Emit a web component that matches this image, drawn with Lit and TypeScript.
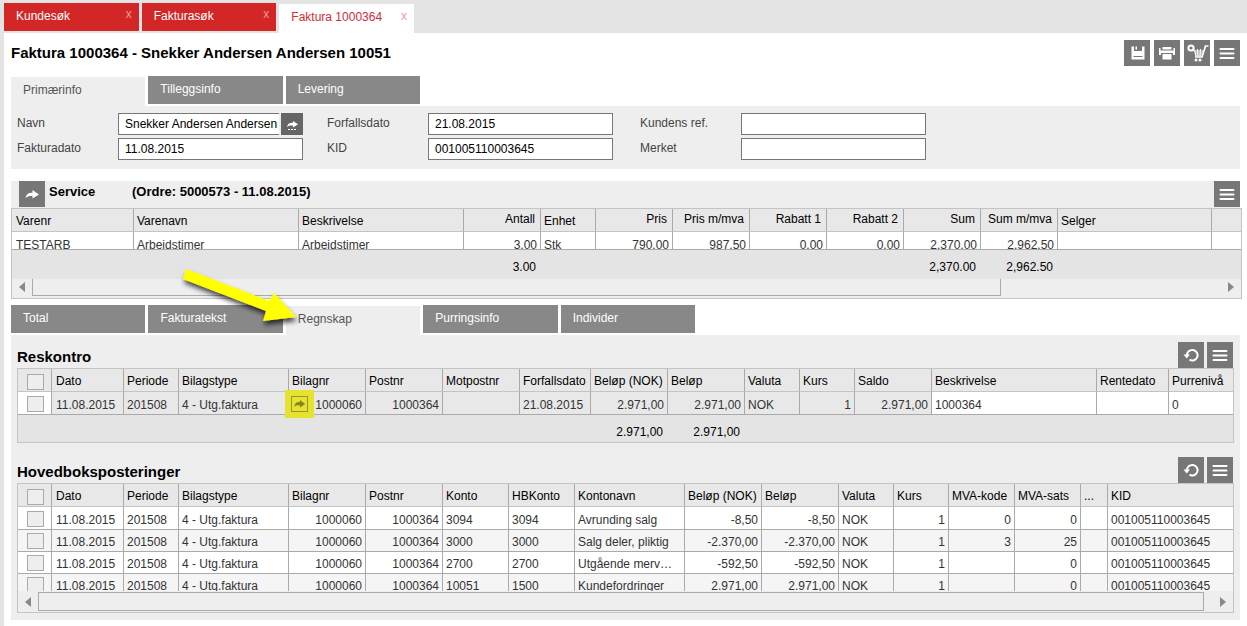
import { LitElement, html, css, svg, nothing, TemplateResult } from "lit";
import { customElement } from "lit/decorators.js";
import { classMap } from "lit/directives/class-map.js";

interface Column {
  label: string;
  width?: number;
  num?: boolean;
  numHead?: boolean;
  check?: boolean;
}

type Row = string[];

const icons: Record<string, TemplateResult> = {
  menu: svg`<path d="M6.500 9h13M6.500 13.500h13M6.500 18h13" stroke="#fff" stroke-width="2" stroke-linecap="round"/>`,
  save: svg`<path fill="#fff" d="M7.500 6.500H10V11h8V6.500h2.500v13h-13z"/><path fill="#fff" d="M11.500 6.500H13V9.500h-1.500z"/><path fill="none" stroke="#777" d="M9.500 16.500h9"/>`,
  print: svg`<path fill="#fff" d="M8.500 7h9v2.500h-9zM5 8h1.500v2.500h13V8H21v7h-2v-2H7v2H5zM8.500 14h9v5.500h-9z"/>`,
  cart: svg`<g fill="none" stroke="#fff"><circle cx="7" cy="8" r="2.600" stroke-width="2"/><path stroke-width="1.700" d="M24.500 6h-3l-3.500 11h-7"/><path stroke-width="1" d="M9.500 11h10M10.500 13h8.500M11 15h7.500M10.500 9.500l1.500 7M13.500 9l.500 7.500M16.500 9l-.500 7.500"/></g><circle cx="12" cy="20" r="1.500" fill="#fff"/><circle cx="16" cy="20" r="1.500" fill="#fff"/>`,
  refresh: svg`<path d="M9 13.500A5.300 5.300 0 1 1 11.500 17.700" fill="none" stroke="#fff" stroke-width="2"/><path fill="#fff" d="M5.500 12.500h6.500l-3.300 4z"/>`,
  jump: svg`<path fill="#fff" d="M6.500 17c.500-3.500 3-5.500 7-5.200V9l6.500 4.500-6.500 4v-2.400c-3-.200-5 .300-7 1.900z"/>`,
};

const icon = (name: string) => html`<svg class="glyph" viewBox="0 0 26 26" aria-hidden="true">${icons[name]}</svg>`;

const iconButton = (name: string, label: string) =>
  html`<button class="tool" type="button" aria-label=${label}>${icon(name)}</button>`;

const serviceColumns: Column[] = [
  { label: "Varenr", width: 122 },
  { label: "Varenavn", width: 165 },
  { label: "Beskrivelse", width: 165 },
  { label: "Antall", width: 77, num: true, numHead: true },
  { label: "Enhet", width: 55 },
  { label: "Pris", width: 77, num: true, numHead: true },
  { label: "Pris m/mva", width: 77, num: true, numHead: true },
  { label: "Rabatt 1", width: 77, num: true, numHead: true },
  { label: "Rabatt 2", width: 77, num: true, numHead: true },
  { label: "Sum", width: 77, num: true, numHead: true },
  { label: "Sum m/mva", width: 77, num: true, numHead: true },
  { label: "Selger", width: 154 },
  { label: "" },
];
const serviceRows: Row[] = [
  ["TESTARB", "Arbeidstimer", "Arbeidstimer", "3.00", "Stk", "790.00", "987.50", "0.00", "0.00", "2.370.00", "2.962.50", "", ""],
];
const serviceTotals: Row = ["", "", "", "3.00", "", "", "", "", "", "2,370.00", "2,962.50", "", ""];

const ledgerColumns: Column[] = [
  { label: "", width: 34, check: true },
  { label: "Dato", width: 72 },
  { label: "Periode", width: 55 },
  { label: "Bilagstype", width: 110 },
  { label: "Bilagnr", width: 77, num: true },
  { label: "Postnr", width: 77, num: true },
  { label: "Motpostnr", width: 77 },
  { label: "Forfallsdato", width: 71 },
  { label: "Beløp (NOK)", width: 77, num: true },
  { label: "Beløp", width: 77, num: true },
  { label: "Valuta", width: 55 },
  { label: "Kurs", width: 55, num: true },
  { label: "Saldo", width: 77, num: true },
  { label: "Beskrivelse", width: 165 },
  { label: "Rentedato", width: 72 },
  { label: "Purrenivå" },
];
const ledgerRows: Row[] = [
  ["", "11.08.2015", "201508", "4 - Utg.faktura", "1000060", "1000364", "", "21.08.2015", "2.971,00", "2.971,00", "NOK", "1", "2.971,00", "1000364", "", "0"],
];
const ledgerTotals: Row = ["", "", "", "", "", "", "", "", "2.971,00", "2.971,00", "", "", "", "", "", ""];

const accountColumns: Column[] = [
  { label: "", width: 34, check: true },
  { label: "Dato", width: 72 },
  { label: "Periode", width: 55 },
  { label: "Bilagstype", width: 110 },
  { label: "Bilagnr", width: 77, num: true },
  { label: "Postnr", width: 77, num: true },
  { label: "Konto", width: 66 },
  { label: "HBKonto", width: 66 },
  { label: "Kontonavn", width: 110 },
  { label: "Beløp (NOK)", width: 77, num: true },
  { label: "Beløp", width: 77, num: true },
  { label: "Valuta", width: 55 },
  { label: "Kurs", width: 55, num: true },
  { label: "MVA-kode", width: 66, num: true },
  { label: "MVA-sats", width: 66, num: true },
  { label: "...", width: 27 },
  { label: "KID" },
];
const account = (konto: string, hb: string, navn: string, belop: string, kode: string, sats: string): Row => [
  "", "11.08.2015", "201508", "4 - Utg.faktura", "1000060", "1000364", konto, hb, navn, belop, belop, "NOK", "1", kode, sats, "", "001005110003645",
];
const accountRows: Row[] = [
  account("3094", "3094", "Avrunding salg", "-8,50", "0", "0"),
  account("3000", "3000", "Salg deler, pliktig", "-2.370,00", "3", "25"),
  account("2700", "2700", "Utgående merv…", "-592,50", "", "0"),
  account("10051", "1500", "Kundefordringer", "2.971,00", "", "0"),
];

const colgroup = (columns: Column[]) => html`<colgroup>
  ${columns.map((c) => (c.width ? html`<col style="width:${c.width}px" />` : html`<col />`))}
</colgroup>`;

const checkbox = (label: string) => html`<input class="check" type="checkbox" aria-label=${label} />`;

const totalsRow = (columns: Column[], totals: Row) => html`<tr class="totals">
  ${totals.map((t, i) => html`<td class=${classMap({ num: !!columns[i].num })}>${t}</td>`)}
</tr>`;

const grid = (columns: Column[], rows: Row[], kind: string, linkColumn = -1) => html`<table class="grid ${kind}">
  ${colgroup(columns)}
  <thead>
    <tr>
      ${columns.map(
        (c) => html`<th scope="col" class=${classMap({ num: !!c.numHead, pick: !!c.check })}>
          ${c.check ? checkbox("Velg alle") : c.label}
        </th>`,
      )}
    </tr>
  </thead>
  <tbody>
    ${rows.map(
      (row) => html`<tr>
        ${row.map(
          (value, i) => html`<td class=${classMap({ num: !!columns[i].num, pick: !!columns[i].check, linked: i === linkColumn })}>
            ${columns[i].check ? checkbox("Velg rad") : nothing}${i === linkColumn
              ? html`<button class="row-link" type="button" aria-label="Åpne bilag">
                  <svg class="glyph" viewBox="0 0 16 16" aria-hidden="true">
                    <path fill="#858325" d="M2 11c.500-4 3-5.500 6.500-5.200V3.500L14.500 8l-6 4V9.600C6 9.400 4 9.800 2 11z" />
                  </svg></button>`
              : nothing}${value}
          </td>`,
        )}
      </tr>`,
    )}
  </tbody>
</table>`;

const scroller = (share: number, kind: string) => html`<div class="scroller ${kind}">
  <button class="step" type="button" aria-label="Rull mot venstre">
    <svg class="tri" viewBox="0 0 6 10" aria-hidden="true"><path d="M6 0v10L0 5z" fill="#888" /></svg>
  </button>
  <div class="track"><div class="thumb" style="width:${share}%"></div></div>
  <button class="step" type="button" aria-label="Rull mot høyre">
    <svg class="tri" viewBox="0 0 6 10" aria-hidden="true"><path d="M0 0v10l6-5z" fill="#888" /></svg>
  </button>
</div>`;

const tabs = (names: string[], active: number) =>
  names.map(
    (name, i) => html`<button type="button" role="tab" aria-selected=${i === active} class=${classMap({ tab: true, active: i === active })}>${name}</button>`,
  );

@customElement("app-root")
export class AppRoot extends LitElement {
  static styles = css`
    :host {
      display: flex;
      flex-direction: column;
      min-height: 100vh;
      box-sizing: border-box;
      padding-left: 4px;
      background: #e4e4e4;
      font: 12px/18px "Liberation Sans", Arial, sans-serif;
      color: #000;
    }
    *, *::before, *::after { box-sizing: border-box; }
    button, input { font: inherit; color: inherit; margin: 0; border-radius: 0; }
    button { border: 0; padding: 0; background: none; cursor: pointer; }
    h1, h2, h3 { margin: 0; font-weight: bold; }

    .windows { display: flex; gap: 3px; width: 410px; height: 33px; padding-top: 3px; }
    .window { flex: 1; display: flex; justify-content: space-between; height: 28px; padding: 0 7px 0 12px; background: #d32626; color: #fff; }
    .window .name { padding-bottom: 2px; }
    .window .close { height: 22px; color: #f09c9c; }
    .window.current { height: 29px; margin-top: 1px; background: #fff; color: #d32b3b; }
    .window.current .name { padding-bottom: 4px; }
    .window.current .close { height: 24px; }

    main { flex: 1; background: #fff; padding: 0 7px 6px; }
    .title-bar { display: flex; justify-content: space-between; align-items: flex-start; height: 43px; padding-top: 7px; }
    h1 { font-size: 15px; line-height: 26px; }
    .tools { display: flex; gap: 4px; }
    .section-tools { display: flex; gap: 3px; padding-right: 1px; }
    .tool { display: block; width: 26px; height: 26px; background: #777; }
    .glyph { display: block; width: 100%; height: 100%; }

    .tabs { display: flex; gap: 3px; height: 30px; }
    .tabs.top { width: 409px; }
    .tabs.lower { position: relative; width: 684px; margin-top: 6px; }
    .tab { flex: 1; height: 28px; padding: 0 12px 2px; background: #888; color: #fff; text-align: left; }
    .tab.active { height: 29px; margin-top: 1px; padding-bottom: 4px; background: #eee; color: #555; }
    .pointer { position: absolute; left: 165px; top: -43px; width: 130px; height: 70px; pointer-events: none; }

    .panel { background: #eee; }
    .form { display: grid; grid-template-columns: 101px 209px 101px 212px 101px 185px; row-gap: 3px; padding: 7px 6px 9px; color: #444; }
    .form label { line-height: 20px; }
    .field { display: flex; width: 185px; height: 22px; }
    .field input { flex: 1; min-width: 0; border: 1px solid #777; padding: 0 6px; background: #fff; color: #000; outline: 0; }
    .field.linked input { border-right: 0; padding-right: 0; }
    .field .go { width: 24px; border-left: 2px solid #eee; background: #666; }

    .service { margin-top: 12px; }
    .service-head { display: flex; height: 27px; padding-left: 8px; }
    .service-head h3 { font-size: 13px; line-height: 21px; }
    .service-head .kind { width: 83px; margin-left: 4px; }
    .service-head .order { flex: 1; }

    .frame { border: 1px solid #c4c4c4; background: #eee; }
    .service .frame { margin-right: -2px; }
    .clip { overflow: hidden; }
    .service .clip { height: 41px; border-bottom: 1px solid #aaa; }
    .accounts .clip { height: 107px; }

    .grid { width: 100%; table-layout: fixed; border-collapse: separate; border-spacing: 0; }
    .grid th, .grid td { height: 22px; padding: 3px 3px 0; border-right: 1px solid #aaa; border-bottom: 1px solid #aaa; line-height: 18px; text-align: left; vertical-align: top; white-space: nowrap; overflow: hidden; }
    .grid th { height: 23px; font-weight: normal; background: #e8e8e8; border-bottom-color: #c4c4c4; }
    .grid th:first-child, .grid td:first-child, .grid .pick + th, .grid .pick + td { padding-left: 4px; }
    .grid td { background: #fff; color: #333; }
    .grid tbody tr:first-child td { height: 23px; padding-top: 4px; }
    .grid tr:nth-child(even) td { background: #f5f5f5; }
    .grid th:last-child, .grid td:last-child { border-right: 0; }
    .grid .num { text-align: right; }
    .grid th.num { padding-top: 1px; padding-right: 5px; }
    .grid th.pick, .grid td.pick { padding: 5px 7px 0 9px; line-height: 0; }
    .grid td.pick { padding-top: 3px; }
    .check { appearance: none; display: block; width: 17px; height: 16px; border: 1px solid #aaa; background: #eee; }
    .ledger td:nth-child(n + 2):nth-child(-n + 13) { background: #e8e8e8; }
    .row-link { position: absolute; left: -4px; top: -2px; width: 29px; height: 28px; padding: 6px; background: #e6e32e; }
    .row-link .glyph { border: 1px solid #96933a; }
    .grid .linked { position: relative; overflow: visible; }

    .grid tbody .totals td, .grid tbody .totals:first-child td { height: 29px; padding: 8px 5px 0 3px; border: 0; background: #e4e4e4; color: #000; }
    .reskontro .grid tbody .totals:first-child td { height: 27px; }

    .scroller { display: flex; height: 19px; }
    .scroller.boxed { height: 21px; padding-top: 1px; }
    .step { display: flex; align-items: center; justify-content: center; width: 20px; }
    .tri { width: 6px; height: 10px; }
    .track { flex: 1; }
    .thumb { height: 19px; border: 1px solid #aaa; }
    .scroller.flat .thumb { height: 17px; border-top: 0; }
    .scroller.flat .step { height: 16px; }

    .accounting { padding: 7px 6px 7px; }
    .section-head { display: flex; justify-content: space-between; height: 26px; }
    h2 { font-size: 15px; line-height: 30px; }
    .accounts { margin-top: 14px; }
  `;

  render() {
    return html`
      <nav class="windows">
        ${["Kundesøk", "Fakturasøk", "Faktura 1000364"].map(
          (name, i) => html`<div class=${classMap({ window: true, current: i === 2 })}>
            <button class="name" type="button">${name}</button>
            <button class="close" type="button" aria-label="Lukk ${name}">x</button>
          </div>`,
        )}
      </nav>
      <main>
        <header class="title-bar">
          <h1>Faktura 1000364 - Snekker Andersen Andersen 10051</h1>
          <div class="tools">
            ${iconButton("save", "Lagre")}${iconButton("print", "Skriv ut")}${iconButton("cart", "Ordre")}${iconButton("menu", "Meny")}
          </div>
        </header>

        <div class="tabs top" role="tablist">${tabs(["Primærinfo", "Tilleggsinfo", "Levering"], 0)}</div>
        <form class="panel form">
          <label for="navn">Navn</label>
          <div class="field linked">
            <input id="navn" value="Snekker Andersen Andersen" />
            <button class="go" type="button" aria-label="Åpne kunde">
              <svg class="glyph" viewBox="0 0 22 22" aria-hidden="true">
                <path fill="#fff" d="M6 14c.500-3 2.500-4.500 6-4.200V8l5 3.200-5 3.300v-2c-2.500-.200-4.500.200-6 1.500z" />
                <path stroke="#fff" stroke-dasharray="2 1" d="M7 16.500h8" />
              </svg>
            </button>
          </div>
          <label for="forfall">Forfallsdato</label>
          <div class="field"><input id="forfall" value="21.08.2015" /></div>
          <label for="ref">Kundens ref.</label>
          <div class="field"><input id="ref" /></div>
          <label for="dato">Fakturadato</label>
          <div class="field"><input id="dato" value="11.08.2015" /></div>
          <label for="kid">KID</label>
          <div class="field"><input id="kid" value="001005110003645" /></div>
          <label for="merket">Merket</label>
          <div class="field"><input id="merket" /></div>
        </form>

        <section class="service">
          <div class="panel service-head">
            ${iconButton("jump", "Åpne ordre")}
            <h3 class="kind">Service</h3>
            <h3 class="order">(Ordre: 5000573 - 11.08.2015)</h3>
            ${iconButton("menu", "Meny")}
          </div>
          <div class="frame">
            <div class="clip">${grid(serviceColumns, serviceRows, "lines")}</div>
            <table class="grid">
              ${colgroup(serviceColumns)}
              <tbody>${totalsRow(serviceColumns, serviceTotals)}</tbody>
            </table>
            ${scroller(81.5, "flat")}
          </div>
        </section>

        <div class="tabs lower" role="tablist">
          ${tabs(["Total", "Fakturatekst", "Regnskap", "Purringsinfo", "Individer"], 2)}
          <svg class="pointer" viewBox="0 0 130 70" aria-hidden="true">
            <defs>
              <filter id="shade" x="-20%" y="-20%" width="140%" height="150%">
                <feDropShadow dx="1" dy="4" stdDeviation="2.500" flood-color="#000" flood-opacity="0.7" />
              </filter>
            </defs>
            <path filter="url(#shade)" fill="#ff0" d="M10 7l83 32 5-8 22 24-33 4 3-10L7 17z" />
          </svg>
        </div>
        <div class="panel accounting">
          <section class="reskontro">
            <div class="section-head">
              <h2>Reskontro</h2>
              <div class="section-tools">${iconButton("refresh", "Oppdater")}${iconButton("menu", "Meny")}</div>
            </div>
            <div class="frame">
              ${grid(ledgerColumns, ledgerRows, "ledger", 4)}
              <table class="grid">
                ${colgroup(ledgerColumns)}
                <tbody>${totalsRow(ledgerColumns, ledgerTotals)}</tbody>
              </table>
            </div>
          </section>
          <section class="accounts">
            <div class="section-head">
              <h2>Hovedboksposteringer</h2>
              <div class="section-tools">${iconButton("refresh", "Oppdater")}${iconButton("menu", "Meny")}</div>
            </div>
            <div class="frame">
              <div class="clip">${grid(accountColumns, accountRows, "entries")}</div>
              ${scroller(99.2, "boxed")}
            </div>
          </section>
        </div>
      </main>
    `;
  }
}
